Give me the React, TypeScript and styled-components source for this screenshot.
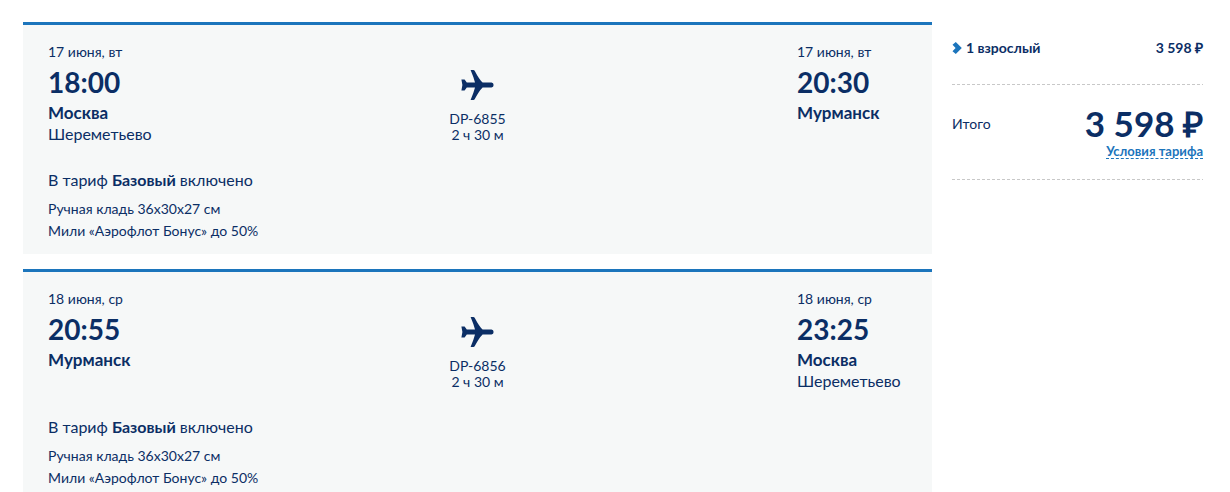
import React from "react";
import styled, { createGlobalStyle } from "styled-components";

const navy = "#0b2e65";
const blue = "#1c75bc";

const GlobalStyle = createGlobalStyle`
  *, *::before, *::after { box-sizing: border-box; }
  body {
    margin: 0;
    background: #fff;
    color: ${navy};
    font-family: Lato, "Liberation Sans", sans-serif;
    font-size: 14px;
    line-height: 20px;
  }
  p, ul { margin: 0; padding: 0; }
`;

const Page = styled.main`
  display: grid;
  grid-template-columns: minmax(0, 1fr) 251px;
  column-gap: 20px;
  align-items: start;
  padding: 22px 27px 0 23px;
`;

const Flights = styled.div`
  display: grid;
  row-gap: 15px;
`;

const Card = styled.article`
  padding: 17px 25px 12px;
  border-top: 3px solid ${blue};
  background: #f6f8f8;
`;

const Route = styled.div`
  display: grid;
  grid-template-columns: 110px 1fr 110px;
`;

const Stop = styled.div`
  display: flex;
  flex-direction: column;
  white-space: nowrap;
`;

const StopDate = styled.span`
  font-size: 14px;
  line-height: 20px;
`;

const Time = styled.time`
  font-size: 28px;
  font-weight: 700;
  line-height: 40px;
`;

const City = styled.strong`
  font-size: 17px;
  font-weight: 700;
  line-height: 21px;
`;

const Airport = styled.span`
  font-size: 16px;
  line-height: 21px;
`;

const Leg = styled.div`
  display: flex;
  flex-direction: column;
  align-items: center;
  padding-top: 28px;
  font-size: 14px;
  line-height: 16px;
`;

const PlaneIcon = styled.svg`
  width: 33px;
  height: 31px;
  margin-bottom: 10px;
  fill: ${navy};
`;

const Fare = styled.p`
  margin: 26px 0 8px;
  font-size: 16px;
  line-height: 20px;

  strong { font-weight: 700; }
`;

const Included = styled.ul`
  list-style: none;
  font-size: 14px;
  line-height: 22px;
`;

const Summary = styled.aside`
  padding-top: 15px;
`;

const SummaryRow = styled.div<{ $total?: boolean }>`
  display: flex;
  justify-content: space-between;
  align-items: flex-start;
  padding-bottom: ${(p) => (p.$total ? "21px" : "26px")};
  padding-top: ${(p) => (p.$total ? "17px" : "0")};
  background: repeating-linear-gradient(90deg, #c8c8c8 0 3px, transparent 3px 5px) bottom / 100% 1px no-repeat;
`;

const Passengers = styled.button`
  display: flex;
  align-items: center;
  gap: 4px;
  padding: 0;
  border: 0;
  background: none;
  color: inherit;
  font: inherit;
  font-size: 14px;
  font-weight: 700;
  line-height: 22px;
  cursor: pointer;
`;

const Chevron = styled.svg`
  width: 10px;
  height: 12px;
  fill: ${blue};
`;

const Price = styled.span`
  font-size: 14px;
  font-weight: 700;
  line-height: 22px;
`;

const TotalLabel = styled.span`
  padding-top: 12px;
`;

const TotalSide = styled.div`
  display: flex;
  flex-direction: column;
  align-items: flex-end;
`;

const TotalPrice = styled.strong`
  font-size: 35px;
  font-weight: 700;
  line-height: 42px;
  white-space: nowrap;
`;

const Conditions = styled.a`
  border-bottom: 1px dashed ${blue};
  color: ${blue};
  font-size: 13px;
  font-weight: 700;
  line-height: 14px;
  text-decoration: none;
`;

type StopInfo = { date: string; time: string; city: string; airport?: string };
type Flight = { number: string; duration: string; from: StopInfo; to: StopInfo };

const flights: Flight[] = [
  {
    number: "DP-6855",
    duration: "2 ч 30 м",
    from: { date: "17 июня, вт", time: "18:00", city: "Москва", airport: "Шереметьево" },
    to: { date: "17 июня, вт", time: "20:30", city: "Мурманск" },
  },
  {
    number: "DP-6856",
    duration: "2 ч 30 м",
    from: { date: "18 июня, ср", time: "20:55", city: "Мурманск" },
    to: { date: "18 июня, ср", time: "23:25", city: "Москва", airport: "Шереметьево" },
  },
];

function StopView({ stop }: { stop: StopInfo }) {
  return (
    <Stop>
      <StopDate>{stop.date}</StopDate>
      <Time>{stop.time}</Time>
      <City>{stop.city}</City>
      {stop.airport && <Airport>{stop.airport}</Airport>}
    </Stop>
  );
}

function FlightCard({ flight }: { flight: Flight }) {
  return (
    <Card>
      <Route>
        <StopView stop={flight.from} />
        <Leg>
          <PlaneIcon viewBox="0 0 33 31" aria-hidden="true">
            <path d="M9.6 0H12.4Q13.3 0 13.8 .9Q18 9 21.6 12.5H30.5Q32.6 12.8 32.6 15T30.5 17.5H21.6Q18 21 13.8 29.1Q13.3 30 12.4 30H9.6Q12.6 23 14 17.5H5.8L3.6 20.6H.4L1.4 15L.4 9.4H3.6L5.8 12.5H14Q12.6 7 9.6 0Z" />
          </PlaneIcon>
          <span>{flight.number}</span>
          <span>{flight.duration}</span>
        </Leg>
        <StopView stop={flight.to} />
      </Route>
      <Fare>
        В тариф <strong>Базовый</strong> включено
      </Fare>
      <Included>
        <li>Ручная кладь 36x30x27 см</li>
        <li>Мили «Аэрофлот Бонус» до 50%</li>
      </Included>
    </Card>
  );
}

export default function App() {
  return (
    <>
      <GlobalStyle />
      <Page>
        <Flights>
          {flights.map((f) => (
            <FlightCard key={f.number} flight={f} />
          ))}
        </Flights>
        <Summary>
          <SummaryRow>
            <Passengers type="button">
              <Chevron viewBox="0 0 10 12" aria-hidden="true">
                <path d="M.5 2.8L3.8 0L9.8 6L3.8 12L.5 9.2L3.6 6Z" />
              </Chevron>
              1 взрослый
            </Passengers>
            <Price>3 598 ₽</Price>
          </SummaryRow>
          <SummaryRow $total>
            <TotalLabel>Итого</TotalLabel>
            <TotalSide>
              <TotalPrice>3 598 ₽</TotalPrice>
              <Conditions href="#conditions">Условия тарифа</Conditions>
            </TotalSide>
          </SummaryRow>
        </Summary>
      </Page>
    </>
  );
}
